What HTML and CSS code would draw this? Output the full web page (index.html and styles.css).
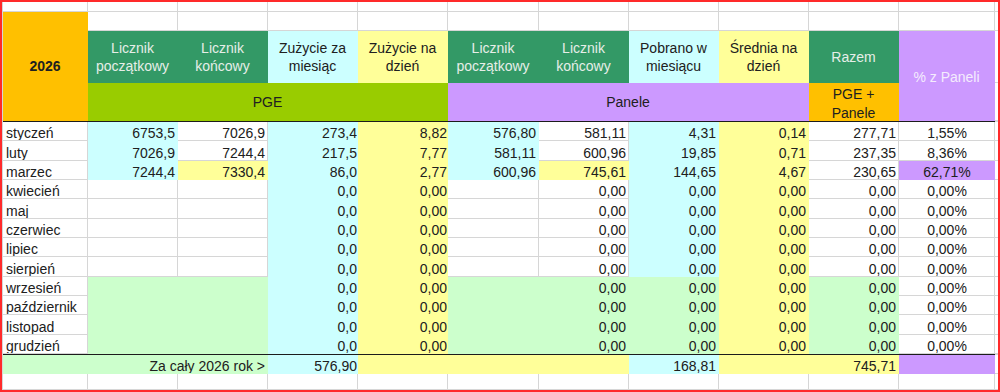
FILE: index.html
```html
<!DOCTYPE html>
<html lang="pl">
<head>
<meta charset="utf-8">
<title>Zużycie energii 2026</title>
<link rel="stylesheet" href="styles.css">
</head>
<body>
<div class="frame">
  <div class="sheet">
    <!-- row 1 -->
    <div class="c w"></div><div class="c w"></div><div class="c w"></div><div class="c w"></div><div class="c w"></div><div class="c w"></div><div class="c w"></div><div class="c w"></div><div class="c w"></div><div class="c w"></div><div class="c w"></div><div class="c e"></div>
    <!-- row 2 -->
    <div class="c or hd year">2026</div>
    <div class="c w"></div><div class="c w"></div><div class="c w"></div><div class="c w"></div><div class="c w"></div><div class="c w"></div><div class="c w"></div><div class="c w"></div><div class="c w"></div><div class="c w"></div><div class="c e"></div>
    <!-- row 3: headers -->
    <div class="c dg hd">Licznik<br>początkowy</div>
    <div class="c dg hd">Licznik<br>końcowy</div>
    <div class="c cy hd">Zużycie za<br>miesiąc</div>
    <div class="c ye hd">Zużycie na<br>dzień</div>
    <div class="c dg hd">Licznik<br>początkowy</div>
    <div class="c dg hd">Licznik<br>końcowy</div>
    <div class="c cy hd">Pobrano w<br>miesiącu</div>
    <div class="c ye hd">Średnia na<br>dzień</div>
    <div class="c dg hd">Razem</div>
    <div class="c lv hd pct">% z Paneli</div>
    <div class="c e"></div>
    <!-- row 4: groups -->
    <div class="c lg hd span4">PGE</div>
    <div class="c lv hd span4">Panele</div>
    <div class="c or hd hd19">PGE +<br>Panele</div>
    <div class="c e"></div>
    <!-- thick line -->
    <div class="ln"></div><div class="e"></div>

    <!-- data rows -->
    <div class="c w">styczeń</div><div class="c cy r">6753,5</div><div class="c w r">7026,9</div><div class="c cy r p0">273,4</div><div class="c ye r p0">8,82</div><div class="c cy r">576,80</div><div class="c w r">581,11</div><div class="c cy r">4,31</div><div class="c ye r">0,14</div><div class="c w r">277,71</div><div class="c w m">1,55%</div><div class="c e"></div>
    <div class="c w">luty</div><div class="c cy r">7026,9</div><div class="c w r">7244,4</div><div class="c cy r p0">217,5</div><div class="c ye r p0">7,77</div><div class="c cy r">581,11</div><div class="c w r">600,96</div><div class="c cy r">19,85</div><div class="c ye r">0,71</div><div class="c w r">237,35</div><div class="c w m">8,36%</div><div class="c e"></div>
    <div class="c w">marzec</div><div class="c cy r">7244,4</div><div class="c ye r">7330,4</div><div class="c cy r p0">86,0</div><div class="c ye r p0">2,77</div><div class="c cy r">600,96</div><div class="c ye r">745,61</div><div class="c cy r">144,65</div><div class="c ye r">4,67</div><div class="c w r">230,65</div><div class="c lv m">62,71%</div><div class="c e"></div>
    <div class="c w">kwiecień</div><div class="c w"></div><div class="c w"></div><div class="c cy r p0">0,0</div><div class="c ye r p0">0,00</div><div class="c w"></div><div class="c w r">0,00</div><div class="c cy r">0,00</div><div class="c ye r">0,00</div><div class="c w r">0,00</div><div class="c w m">0,00%</div><div class="c e"></div>
    <div class="c w">maj</div><div class="c w"></div><div class="c w"></div><div class="c cy r p0">0,0</div><div class="c ye r p0">0,00</div><div class="c w"></div><div class="c w r">0,00</div><div class="c cy r">0,00</div><div class="c ye r">0,00</div><div class="c w r">0,00</div><div class="c w m">0,00%</div><div class="c e"></div>
    <div class="c w">czerwiec</div><div class="c w"></div><div class="c w"></div><div class="c cy r p0">0,0</div><div class="c ye r p0">0,00</div><div class="c w"></div><div class="c w r">0,00</div><div class="c cy r">0,00</div><div class="c ye r">0,00</div><div class="c w r">0,00</div><div class="c w m">0,00%</div><div class="c e"></div>
    <div class="c w">lipiec</div><div class="c w"></div><div class="c w"></div><div class="c cy r p0">0,0</div><div class="c ye r p0">0,00</div><div class="c w"></div><div class="c w r">0,00</div><div class="c cy r">0,00</div><div class="c ye r">0,00</div><div class="c w r">0,00</div><div class="c w m">0,00%</div><div class="c e"></div>
    <div class="c w">sierpień</div><div class="c w"></div><div class="c w"></div><div class="c cy r p0">0,0</div><div class="c ye r p0">0,00</div><div class="c w"></div><div class="c w r">0,00</div><div class="c cy r">0,00</div><div class="c ye r">0,00</div><div class="c w r">0,00</div><div class="c w m">0,00%</div><div class="c e"></div>
    <div class="c w">wrzesień</div><div class="c gr"></div><div class="c gr"></div><div class="c cy r p0">0,0</div><div class="c ye r p0">0,00</div><div class="c gr"></div><div class="c gr r">0,00</div><div class="c gr r">0,00</div><div class="c ye r">0,00</div><div class="c gr r">0,00</div><div class="c w m">0,00%</div><div class="c e"></div>
    <div class="c w">październik</div><div class="c gr"></div><div class="c gr"></div><div class="c cy r p0">0,0</div><div class="c ye r p0">0,00</div><div class="c gr"></div><div class="c gr r">0,00</div><div class="c gr r">0,00</div><div class="c ye r">0,00</div><div class="c gr r">0,00</div><div class="c w m">0,00%</div><div class="c e"></div>
    <div class="c w">listopad</div><div class="c gr"></div><div class="c gr"></div><div class="c cy r p0">0,0</div><div class="c ye r p0">0,00</div><div class="c gr"></div><div class="c gr r">0,00</div><div class="c gr r">0,00</div><div class="c ye r">0,00</div><div class="c gr r">0,00</div><div class="c w m">0,00%</div><div class="c e"></div>
    <div class="c w">grudzień</div><div class="c gr"></div><div class="c gr"></div><div class="c cy r p0">0,0</div><div class="c ye r p0">0,00</div><div class="c gr"></div><div class="c gr r">0,00</div><div class="c gr r">0,00</div><div class="c ye r">0,00</div><div class="c gr r">0,00</div><div class="c w m">0,00%</div><div class="c e"></div>

    <!-- thick line -->
    <div class="ln"></div><div class="e"></div>

    <!-- totals -->
    <div class="c gr r span3">Za cały 2026 rok &gt;</div>
    <div class="c cy r p0">576,90</div>
    <div class="c ye span3"></div>
    <div class="c cy r">168,81</div>
    <div class="c ye r span2">745,71</div>
    <div class="c lv"></div>
    <div class="c e"></div>

    <!-- last row -->
    <div class="c w"></div><div class="c w"></div><div class="c w"></div><div class="c w"></div><div class="c w"></div><div class="c w"></div><div class="c w"></div><div class="c w"></div><div class="c w"></div><div class="c w"></div><div class="c w"></div><div class="c e"></div>
  </div>
</div>
</body>
</html>
```

FILE: styles.css
```css
html, body {
  margin: 0;
  padding: 0;
  background: #ffffff;
}

.frame {
  width: 1000px;
  height: 392px;
  box-sizing: border-box;
  border: 2px solid #ff2a2a;
  overflow: hidden;
}

.sheet {
  height: 388px;
  box-sizing: border-box;
  border-left: 1px solid #d6d6d6;
  display: grid;
  grid-template-columns: 85px 90px 90px 90px 90px 91px 90px 90px 90px 90px 96px 1fr;
  grid-template-rows: 10px 19px 52px 38px 1px repeat(12, 19.333px) 1px 19px 1fr;
  font-family: "Liberation Sans", Arial, sans-serif;
  font-size: 14px;
  color: #202020;
}

.c {
  display: flex;
  align-items: flex-end;
  justify-content: flex-start;
  line-height: 14px;
  box-sizing: border-box;
  border-right: 1px solid transparent;
  border-bottom: 1px solid transparent;
  padding: 0 2px 0 3px;
  white-space: nowrap;
  overflow: hidden;
  min-width: 0;
}

.r { justify-content: flex-end; }
.m { justify-content: center; }
.p0 { padding-right: 0; }

.hd {
  align-items: center;
  justify-content: center;
  text-align: center;
  line-height: 18px;
  white-space: normal;
  padding: 0;
}
.hd19 { line-height: 19px; padding-top: 4px; }

.year {
  grid-row: span 3;
  font-weight: bold;
}
.pct {
  grid-row: span 2;
  padding-top: 3px;
}

.span2 { grid-column: span 2; }
.span3 { grid-column: span 3; }
.span4 { grid-column: span 4; }

.ln {
  grid-column: span 11;
  background: #1c1c1c;
}

/* cell fills */
.w  { background: #ffffff; border-color: #d6d6d6; }
.e  { background: #ffffff; border-right: 0; border-bottom: 1px solid #d6d6d6; }
.or { background: #ffc000; }
.dg { background: #339966; color: #e6eee8; }
.cy { background: #ccffff; }
.ye { background: #ffff99; }
.lg { background: #99cc00; }
.lv { background: #cc99ff; }
.pct { color: #f4ecfd; }
.gr { background: #ccffcc; }
```
